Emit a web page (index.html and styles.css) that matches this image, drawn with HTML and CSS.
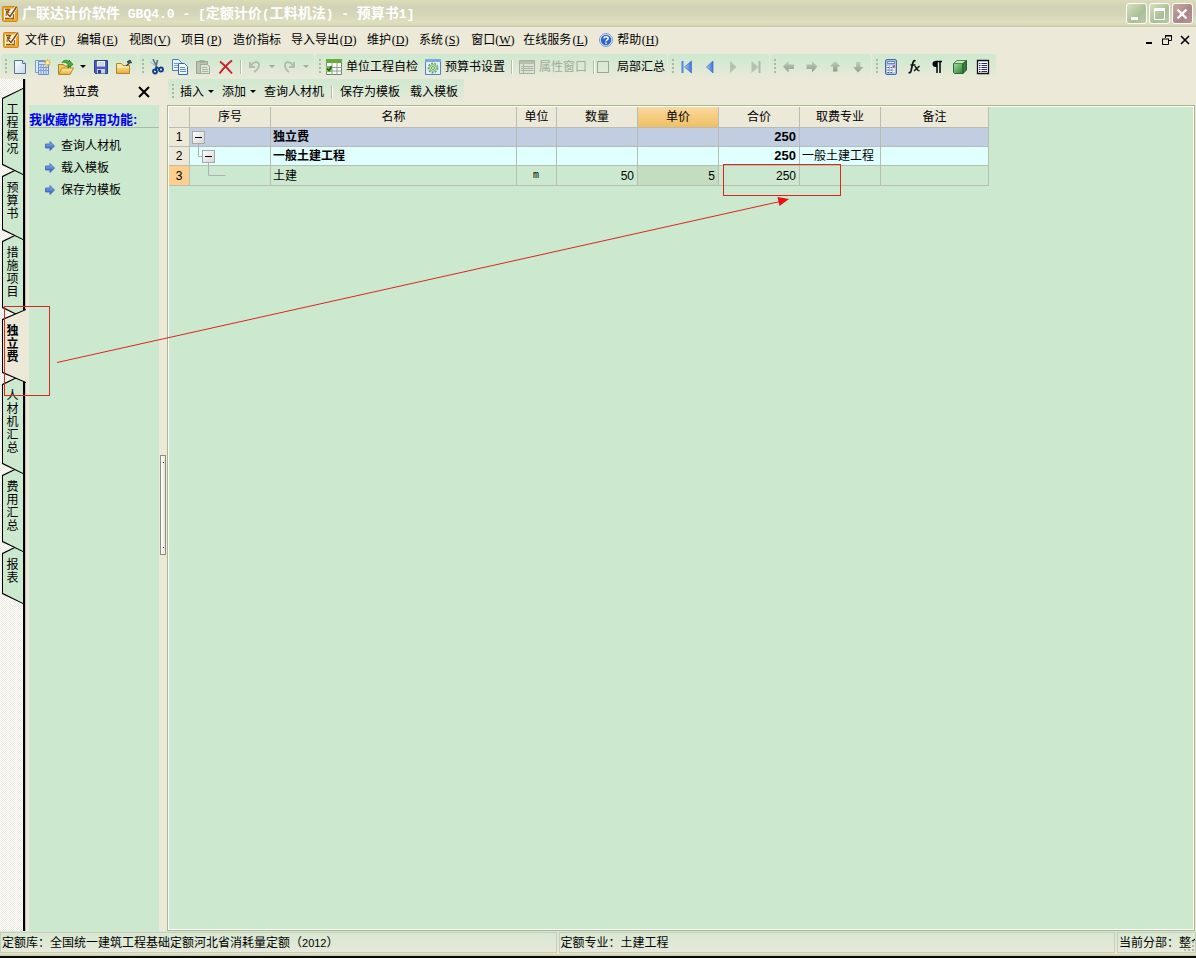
FILE: index.html
```html
<!DOCTYPE html>
<html lang="zh-CN">
<head>
<meta charset="utf-8">
<title>广联达计价软件 GBQ4.0</title>
<link rel="stylesheet" href="styles.css">
</head>
<body>
<svg class="defs" aria-hidden="true">
  <defs>
    <linearGradient id="gBlue" x1="0" y1="0" x2="0" y2="1"><stop offset="0" stop-color="#9dbdf5"/><stop offset="1" stop-color="#2450b8"/></linearGradient>
    <linearGradient id="gNav" x1="0" y1="0" x2="1" y2="0"><stop offset="0" stop-color="#a9cbf8"/><stop offset="1" stop-color="#3d6fd8"/></linearGradient>
    <linearGradient id="gGrey" x1="0" y1="0" x2="0" y2="1"><stop offset="0" stop-color="#c4cebe"/><stop offset="1" stop-color="#909b8a"/></linearGradient>
    <linearGradient id="gFold" x1="0" y1="0" x2="0" y2="1"><stop offset="0" stop-color="#fff0a8"/><stop offset="1" stop-color="#e6ad3c"/></linearGradient>
    <linearGradient id="gPage" x1="0" y1="0" x2="1" y2="1"><stop offset="0" stop-color="#ffffff"/><stop offset="1" stop-color="#c4d6f0"/></linearGradient>
    <linearGradient id="gGreen" x1="0" y1="0" x2="1" y2="1"><stop offset="0" stop-color="#a4dc9c"/><stop offset="1" stop-color="#2c7c34"/></linearGradient>
    <linearGradient id="gBox" x1="0" y1="0" x2="1" y2="1"><stop offset="0" stop-color="#ffffff"/><stop offset="1" stop-color="#d4d4d4"/></linearGradient>
    <symbol id="logo" viewBox="0 0 16 16">
      <rect x="0.500" y="0.500" width="15" height="15" rx="1" fill="#f5a41e" stroke="#c98a2c"/>
      <path d="M2 2.500h11.500v11.500H2z" fill="#fdf3d8"/>
      <path d="M3 3.500h4.500L6 5.500H4.500v1.500h2L5 9H3.500M3 12.500h8.500V8" stroke="#8a5a14" stroke-width="1.300" fill="none"/>
      <path d="M14.500 1L8 10.500 5.500 8" stroke="#fff" stroke-width="3" fill="none"/>
      <path d="M14.500 1L8 10.500 5.500 8" stroke="#7b4a16" stroke-width="1.500" fill="none"/>
      <path d="M13.500 5v8.500H3" stroke="#f5a41e" fill="none"/>
    </symbol>
    <symbol id="bluearrow" viewBox="0 0 10 10"><path d="M.5 3h4.500V.5L9.500 5 5 9.500V7H.5z" fill="url(#gBlue)" stroke="#3c62b4" stroke-width=".8"/></symbol>
  </defs>
</svg>

<div class="app">
  <header class="titlebar">
    <svg class="ico"><use href="#logo"/></svg>
    <h1>广联达计价软件<span class="lat"> GBQ4.0 - [</span>定额计价<span class="lat">(</span>工料机法<span class="lat">) - </span>预算书<span class="lat">1]</span></h1>
    <div class="winbtns">
      <button class="winbtn" aria-label="最小化"><svg width="18" height="18"><path d="M4 13.500h7" stroke="#fff" stroke-width="3"/></svg></button>
      <button class="winbtn" aria-label="最大化"><svg width="18" height="18"><path d="M4.500 5v9.500h10V5" stroke="#fff" fill="none"/><path d="M4 4.500h11" stroke="#fff" stroke-width="3"/></svg></button>
      <button class="winbtn close" aria-label="关闭"><svg width="18" height="18"><path d="M4.500 4.500l9 9M13.500 4.500l-9 9" stroke="#fff" stroke-width="2.400"/></svg></button>
    </div>
  </header>

  <nav class="menubar">
    <svg class="ico"><use href="#logo"/></svg>
    <button>文件<span class="key">(<u>F</u>)</span></button>
    <button>编辑<span class="key">(<u>E</u>)</span></button>
    <button>视图<span class="key">(<u>V</u>)</span></button>
    <button>项目<span class="key">(<u>P</u>)</span></button>
    <button>造价指标</button>
    <button>导入导出<span class="key">(<u>D</u>)</span></button>
    <button>维护<span class="key">(<u>D</u>)</span></button>
    <button>系统<span class="key">(<u>S</u>)</span></button>
    <button>窗口<span class="key">(<u>W</u>)</span></button>
    <button>在线服务<span class="key">(<u>L</u>)</span></button>
    <button class="help"><svg width="14" height="14" viewBox="0 0 14 14"><circle cx="7" cy="7" r="6.500" fill="#dfe8f6" stroke="#7a98cc"/><circle cx="7" cy="7" r="5.200" fill="#2c66cc"/><path d="M5 5.600c0-2.600 4.200-2.500 4.200-.1C9.200 7 7 6.900 7 8.600M7 9.600v1.500" stroke="#fff" stroke-width="1.500" fill="none"/></svg><span>帮助<span class="key">(<u>H</u>)</span></span></button>
    <div class="mdi">
      <button aria-label="最小化子窗口"><svg width="10" height="10"><path d="M2 8h6" stroke="#000" stroke-width="2"/></svg></button>
      <button aria-label="还原子窗口"><svg width="10" height="10"><path d="M3.500 3V.5h6v5H7M3 1h7" stroke="#000" fill="none"/><path d="M.5 4v5.500h6V4M0 4h7" stroke="#000" fill="none"/></svg></button>
      <button aria-label="关闭子窗口"><svg width="10" height="10"><path d="M1 1l8 8M9 1l-8 8" stroke="#000" stroke-width="1.600"/></svg></button>
    </div>
  </nav>

  <div class="toolbar">
    <div class="group">
      <i class="grip"></i>
      <button class="tb" aria-label="新建"><svg class="ico" viewBox="0 0 16 16"><path d="M2.500 1.500h8l3 3v10h-11z" fill="url(#gPage)" stroke="#5c7390"/><path d="M10.500 1.500v3h3" fill="#dfe9f8" stroke="#5c7390"/></svg></button>
      <button class="tb" aria-label="新建模板"><svg class="ico" viewBox="0 0 16 16"><path d="M.5 1.500h10v12H.5z" fill="#dce9fa" stroke="#7e9cc8"/><path d="M3.500 2.500h10v13h-10z" fill="#cfe0f6" stroke="#6e90c4"/><path d="M6 5v10M8.500 5v10M11 7v8M4 5.500h6M4 8.500h9M4 11.500h9" stroke="#7d9ed0"/><path d="M12.500 0v7M9 3.500h7M10 1l5 5M15 1l-5 5" stroke="#efb93e" stroke-width="1.200"/><circle cx="12.500" cy="3.500" r="1.500" fill="#fff6b8"/></svg></button>
      <button class="tb" aria-label="打开"><svg class="ico" viewBox="0 0 16 16"><path d="M.5 14.500v-9h5l1 1.500h6v7.500z" fill="#f0cc5c" stroke="#ae8120"/><path d="M.5 15.500L4 9h11.500l-3.500 6.500z" fill="url(#gFold)" stroke="#b98a24"/><path d="M4 3.500C6 .5 9.500.5 11 3V1l4 4.500-5 3.500V5.500C8.500 3 6 3 4 3.500z" fill="#4cae36" stroke="#247a1e" stroke-width=".8"/></svg></button>
      <button class="caret" aria-label="打开选项"></button>
      <button class="tb" aria-label="保存"><svg class="ico" viewBox="0 0 16 16"><path d="M1.500 1.500h13v13h-12l-1-1z" fill="#4a5fb4" stroke="#2b3c8c"/><path d="M4 2h8v5.500H4z" fill="#f4f6fc"/><path d="M5 4h6M5 6h6" stroke="#aeb8d8"/><path d="M4 10h8v4.500H4z" fill="#c8d0ea"/><path d="M5 11h3v3.500H5z" fill="#2b3c8c"/></svg></button>
      <button class="tb" aria-label="导出"><svg class="ico" viewBox="0 0 16 16"><path d="M.5 14.500v-10h5l1.500 2h6.500v8z" fill="url(#gFold)" stroke="#b08428"/><path d="M1 8h12" stroke="#fff5c4"/><path d="M10 6.500c2 0 3.500-1.500 3.500-4M11 3l3-2 1.500 3z" stroke="#3c4450" fill="#3c4450"/></svg></button>
    </div>
    <div class="group">
      <i class="grip"></i>
      <button class="tb" aria-label="剪切"><svg class="ico" viewBox="0 0 16 16"><path d="M4 0l4.500 9.500M8.500 1L6.500 9.500" stroke="#60708c" stroke-width="1.600"/><path d="M1.500 3l5 4" stroke="#9ba7bb"/><circle cx="6" cy="12.500" r="2" fill="none" stroke="#123a8c" stroke-width="1.800"/><circle cx="12" cy="10.500" r="2" fill="none" stroke="#123a8c" stroke-width="1.800"/><path d="M7 8l4 2M7 9v3" stroke="#123a8c" stroke-width="1.500"/></svg></button>
      <button class="tb" aria-label="复制"><svg class="ico" viewBox="0 0 16 16"><path d="M.5.500h6l3 3v8h-9z" fill="#e8f1fd" stroke="#4a7cc4"/><path d="M2 4.500h4M2 6.500h4M2 8.500h4" stroke="#74a0dc"/><path d="M6.500 4.500h6l3 3v8h-9z" fill="#f2f7fe" stroke="#2f66b4"/><path d="M8 8.500h5M8 10.500h6M8 12.500h6" stroke="#5b8cd0"/></svg></button>
      <button class="tb" aria-label="粘贴" disabled><svg class="ico" viewBox="0 0 16 16"><path d="M1.500 2.500h11v12h-11z" fill="#b9c4b4" stroke="#98a494"/><path d="M4.500 1h5v3h-5z" fill="#a3ae9e"/><path d="M5.500 5.500h7l2 2v7h-9z" fill="#dce4d6" stroke="#9fab9a"/><path d="M7 8.500h5M7 10.500h6M7 12.500h6" stroke="#a9b4a4"/></svg></button>
      <button class="tb" aria-label="删除"><svg class="ico" viewBox="0 0 16 16"><path d="M2 2.500c4 3 8 7 12 12M14 1.500C9 5 5 10 1.500 14.500" stroke="#c8202c" stroke-width="2" fill="none"/></svg></button>
      <i class="sep"></i>
      <button class="tb ud" aria-label="撤销" disabled><svg class="ico" viewBox="0 0 16 16"><path d="M4 7c2-5 8-5 8-1 0 3-3 6-5 7M3 3v5h5" stroke="#b3bdae" stroke-width="2" fill="none"/></svg></button>
      <button class="caret" aria-label="撤销列表" disabled></button>
      <button class="tb ud" aria-label="重做" disabled><svg class="ico" viewBox="0 0 16 16"><path d="M12 7c-2-5-8-5-8-1 0 3 1 5 4 7M13 3v5H8" stroke="#b3bdae" stroke-width="2" fill="none"/></svg></button>
      <button class="caret" aria-label="重做列表" disabled></button>
    </div>
    <div class="group">
      <i class="grip"></i>
      <button class="tbt"><svg class="ico" viewBox="0 0 16 16"><path d="M.5 1.500h15v14H.5z" fill="#fff" stroke="#6c8c6c"/><path d="M0 0h16v4H0z" fill="#6aaa40"/><path d="M0 8.500h16M0 12h16M6 4v11.500M11 4v11.500" stroke="#8c9c90"/><path d="M0 7h6v6H0z" fill="#8ab65c"/><path d="M1 9.500l2 2 2.500-4" stroke="#1c5c1c" stroke-width="1.500" fill="none"/></svg>单位工程自检</button>
      <button class="tbt"><svg class="ico" viewBox="0 0 16 16"><path d="M.5.500h15v15H.5z" fill="#e4f0f8" stroke="#5484bc"/><path d="M0 0h16v3H0z" fill="#7ca8dc"/><circle cx="8" cy="9" r="4.600" fill="#d6efd0" stroke="#6ba56c" stroke-width="1.600" stroke-dasharray="2 1.200"/><circle cx="8" cy="9" r="3.300" fill="none" stroke="#7db67a"/><circle cx="8" cy="9" r="1.500" fill="#fff" stroke="#5c9860"/></svg>预算书设置</button>
      <i class="sep"></i>
      <button class="tbt" disabled><svg class="ico" viewBox="0 0 16 16"><path d="M.5 1.500h15v13H.5z" fill="#dae2d4" stroke="#a3afa0"/><path d="M1 2h14v3H1z" fill="#b4c0b0"/><path d="M2 7.500h2M5 7.500h9M2 9.500h2M5 9.500h9M2 11.500h2M5 11.500h9M4.500 5v9" stroke="#a9b4a5"/></svg>属性窗口</button>
      <i class="sep"></i>
      <label class="check"><input type="checkbox">局部汇总</label>
    </div>
    <div class="group">
      <i class="grip"></i>
      <button class="tb" aria-label="首行"><svg class="ico" viewBox="0 0 16 16"><path d="M3.500 2v12" stroke="#5484dc" stroke-width="2"/><path d="M12.500 2v12l-7-6z" fill="url(#gNav)" stroke="#4a78d0" stroke-width=".8"/></svg></button>
      <button class="tb" aria-label="上一行"><svg class="ico" viewBox="0 0 16 16"><path d="M11 2v12L4.500 8z" fill="url(#gNav)" stroke="#4a78d0" stroke-width=".8"/></svg></button>
      <button class="tb" aria-label="下一行" disabled><svg class="ico" viewBox="0 0 16 16"><path d="M5 2v12l6.500-6z" fill="#b4c2b2"/></svg></button>
      <button class="tb" aria-label="末行" disabled><svg class="ico" viewBox="0 0 16 16"><path d="M3.500 2v12l7-6z" fill="#b4c2b2"/><path d="M11.500 2v12" stroke="#acbaaa" stroke-width="2"/></svg></button>
    </div>
    <div class="group">
      <i class="grip"></i>
      <button class="tb" aria-label="升级" disabled><svg class="ico" viewBox="0 0 16 16"><path d="M2 7.500L7.500 2v3.500H13v4.500H7.500v3.500z" fill="url(#gGrey)"/></svg></button>
      <button class="tb" aria-label="降级" disabled><svg class="ico" viewBox="0 0 16 16"><path d="M13.500 7.500L8 2v3.500H2.500v4.500H8v3.500z" fill="url(#gGrey)"/></svg></button>
      <button class="tb" aria-label="上移" disabled><svg class="ico" viewBox="0 0 16 16"><path d="M8 2L3 7.500h3v5h4.500v-5h3z" fill="url(#gGrey)"/></svg></button>
      <button class="tb" aria-label="下移" disabled><svg class="ico" viewBox="0 0 16 16"><path d="M8 13.500L3 8h3V3h4.500v5h3z" fill="url(#gGrey)"/></svg></button>
    </div>
    <div class="group">
      <i class="grip"></i>
      <button class="tb" aria-label="计算器"><svg class="ico" viewBox="0 0 16 16"><rect x="2.500" y=".5" width="11" height="15" rx="1.500" fill="#a9c1ea" stroke="#4b68a8"/><path d="M4.500 2.500h7v2h-7z" fill="#eef4fd" stroke="#6884c0"/><path d="M4 7.500h2M7 7.500h2M4 10h2M7 10h2M4 12.500h2M7 12.500h2M10 12.500h2M10 10h2" stroke="#fff" stroke-width="1.600"/><path d="M4.500 8.500h1.500M7.500 8.500H9M4.500 11h1.500M7.500 11H9M4.500 13.500h1.500M7.500 13.500H9" stroke="#3c5498"/><path d="M10 7.500h2" stroke="#d03c3c" stroke-width="2"/></svg></button>
      <button class="tb" aria-label="函数"><svg class="ico" viewBox="0 0 16 16"><path d="M9.500 2C7.500 1 7 3 6.500 5.500L5 12c-.4 1.500-1.200 2-2.500 1.500M4.500 6h5" stroke="#111" stroke-width="1.700" fill="none"/><path d="M8.500 7.500c2-.5 2 5 5 4M13.500 7L8 12" stroke="#111" stroke-width="1.400" fill="none"/></svg></button>
      <button class="tb" aria-label="段落"><svg class="ico" viewBox="0 0 16 16"><path d="M13 2.500H6.500M8 2v12M11 2v12" stroke="#000" stroke-width="1.500"/><path d="M8 2H6.500a3 3 0 0 0 0 6H8z" fill="#000"/></svg></button>
      <button class="tb" aria-label="立体图"><svg class="ico" viewBox="0 0 16 16"><path d="M1.500 4.500h9.500v10H2.500l-1-1z" fill="url(#gGreen)" stroke="#2c6c34"/><path d="M1.500 4.500L5 1.500h9.500l-3.500 3z" fill="#c6eabc" stroke="#4c8c4c"/><path d="M11 4.500l3.500-3V11l-3.500 3.500z" fill="#347c3c" stroke="#24602c"/></svg></button>
      <button class="tb" aria-label="清单"><svg class="ico" viewBox="0 0 16 16"><path d="M2.500 1.500h11v13h-11z" fill="#fff" stroke="#111" stroke-width="1.300"/><path d="M4 4.500h1.500M6.500 4.500H12M4 6.500h1.500M6.500 6.500H12M4 8.500h1.500M6.500 8.500H12M4 10.500h1.500M6.500 10.500H12M4 12.500h1.500M6.500 12.500H12" stroke="#24248c"/></svg></button>
    </div>
  </div>

  <main class="work">
    <div class="tabs" role="tablist">
      <button class="tab" role="tab">工程概况</button>
      <button class="tab" role="tab">预算书</button>
      <button class="tab" role="tab">措施项目</button>
      <button class="tab selected" role="tab" aria-selected="true">独立费</button>
      <button class="tab" role="tab">人材机汇总</button>
      <button class="tab" role="tab">费用汇总</button>
      <button class="tab" role="tab">报表</button>
    </div>

    <aside class="side">
      <div class="sidehead"><h2>独立费</h2><button aria-label="关闭面板"><svg width="12" height="12"><path d="M1 1l10 10M11 1L1 11" stroke="#000" stroke-width="2"/></svg></button></div>
      <div class="sidebody">
        <h3>我收藏的常用功能:</h3>
        <a href="#"><svg width="10" height="10"><use href="#bluearrow"/></svg>查询人材机</a>
        <a href="#"><svg width="10" height="10"><use href="#bluearrow"/></svg>载入模板</a>
        <a href="#"><svg width="10" height="10"><use href="#bluearrow"/></svg>保存为模板</a>
      </div>
    </aside>

    <div class="splitter"><i class="handle"></i></div>

    <section class="content">
      <div class="subbar">
        <div class="group">
          <i class="grip"></i>
          <button class="txt">插入</button><button class="caret" aria-label="插入选项"></button>
          <button class="txt">添加</button><button class="caret" aria-label="添加选项"></button>
          <button class="txt">查询人材机</button>
          <i class="sep"></i>
          <button class="txt">保存为模板</button>
          <button class="txt">载入模板</button>
        </div>
      </div>
      <div class="gridbox">
        <table class="grid">
          <colgroup><col class="c0"><col class="c1"><col class="c2"><col class="c3"><col class="c1"><col class="c1"><col class="c1"><col class="c1"><col class="c8"></colgroup>
          <thead>
            <tr><th></th><th>序号</th><th>名称</th><th>单位</th><th>数量</th><th class="cur">单价</th><th>合价</th><th>取费专业</th><th>备注</th></tr>
          </thead>
          <tbody>
            <tr class="lvl1"><th>1</th><td class="tree"><svg width="60" height="18"><path d="M8.500 16v2" stroke="#b0b0b0"/><rect x="2.500" y="3.500" width="12" height="12" fill="url(#gBox)" stroke="#a8a8a8"/><path d="M5 9.500h7" stroke="#000"/></svg></td><td>独立费</td><td></td><td></td><td></td><td class="num">250</td><td></td><td></td></tr>
            <tr class="lvl2"><th>2</th><td class="tree"><svg width="60" height="18"><path d="M8.500 0v9.500h4M18.500 16v2" stroke="#b0b0b0" fill="none"/><rect x="12.500" y="3.500" width="12" height="12" fill="url(#gBox)" stroke="#a8a8a8"/><path d="M15 9.500h7" stroke="#000"/></svg></td><td>一般土建工程</td><td></td><td></td><td></td><td class="num">250</td><td class="plain">一般土建工程</td><td></td></tr>
            <tr class="lvl3"><th class="cur">3</th><td class="tree"><svg width="60" height="18"><path d="M18.500 0v9.500h17" stroke="#b0b0b0" fill="none"/></svg></td><td>土建</td><td class="unit">m</td><td class="num">50</td><td class="num active">5</td><td class="num">250</td><td></td><td></td></tr>
          </tbody>
        </table>
      </div>
    </section>
  </main>

  <footer class="status">
    <div class="pane">定额库：全国统一建筑工程基础定额河北省消耗量定额（<span class="dig">2012</span>）</div>
    <div class="pane">定额专业：土建工程</div>
    <div class="pane last">当前分部：整个<svg class="sizegrip" width="12" height="12"><path d="M9 2h2M9 6h2M5 6h2M9 10h2M5 10h2M1 10h2" stroke="#b2b8a4" stroke-width="2"/></svg></div>
  </footer>

  <svg class="marks" width="860" height="420" aria-hidden="true">
    <g fill="none" stroke="#d8281c">
      <rect x="4.500" y="306.500" width="45" height="89"/>
      <rect x="723.500" y="164.500" width="117" height="31"/>
      <path d="M57 362.500L780 201.500"/>
    </g>
    <path d="M789 199l-11.500-2 2 9z" fill="#e81010"/>
  </svg>
</div>
</body>
</html>
```
FILE: styles.css
```css
* { box-sizing: border-box; }

body {
  margin: 0;
  background: #ece9d8;
  color: #000;
  font: 12px/16px "Liberation Sans", "Noto Sans CJK SC", sans-serif;
}

button {
  margin: 0;
  padding: 0;
  border: 0;
  background: none;
  color: inherit;
  font: inherit;
  white-space: nowrap;
}

h1, h2, h3 { margin: 0; font: inherit; }
svg { display: block; flex: none; }
.defs { position: absolute; width: 0; height: 0; }
.ico { width: 16px; height: 16px; }

.app {
  position: relative;
  display: flex;
  flex-direction: column;
  height: 100vh;
  overflow: hidden;
  border-bottom: 2px solid #0c0c06;
}

/* title bar */
.titlebar {
  display: flex;
  align-items: center;
  flex: none;
  height: 27px;
  padding: 0 3px 0 2px;
  gap: 4px;
  background: linear-gradient(#dddcb8, #d2d3b6 25%, #d5d6b9 55%, #dfdfbf 80%, #dadab9 92%, #c4c4a6);
}
.titlebar h1 {
  flex: 1;
  color: #fff;
  font-size: 14px;
  font-weight: bold;
  white-space: pre;
}
.lat { font-family: "Liberation Mono", monospace; font-size: 13px; }
.winbtns { display: flex; gap: 2px; }
.winbtn {
  width: 21px;
  height: 21px;
  border: 1px solid #fff;
  border-radius: 3px;
  background: linear-gradient(135deg, #d7dfbe, #a9c097 60%, #b8caa3);
}
.winbtn.close { background: linear-gradient(135deg, #c9a8a4, #ab8486 60%, #b89496); }

/* menu bar */
.menubar {
  display: flex;
  align-items: center;
  flex: none;
  gap: 10px;
  height: 26px;
  padding: 0 6px 0 3px;
}
.menubar .ico { margin-right: -4px; }
.key {
  display: inline-block;
  width: 18px;
  font-family: "Liberation Serif", serif;
  font-size: 12px;
  line-height: 16px;
  text-align: center;
}
.help { display: flex; align-items: center; gap: 4px; }
.mdi { display: flex; gap: 8px; margin-left: auto; }

/* toolbars */
.toolbar { display: flex; flex: none; gap: 1px; height: 26px; padding: 1px 0 0 1px; }
.group {
  display: flex;
  align-items: center;
  height: 25px;
  padding-right: 2px;
  border-radius: 2px;
  background: linear-gradient(#cfe8d0, #dbe9d4 50%, #ebe9d9);
}
.grip {
  width: 3px;
  height: 15px;
  margin: 0 0 0 4px;
  background: repeating-linear-gradient(#a9b8a4 0 2px, transparent 2px 4px);
  border-right: 1px solid #dfead6;
}
.sep { width: 7px; height: 14px; background: linear-gradient(90deg, transparent 3px, #b4bda8 3px 4px, #fff 4px 5px, transparent 5px); }
.tb { display: flex; align-items: center; justify-content: center; width: 23px; height: 23px; }
.ud { width: 22px; }
.tbt { display: flex; align-items: center; gap: 4px; padding: 0 3px 0 4px; }
.tbt:disabled { color: #a5ab9b; }
.caret { display: flex; align-items: center; justify-content: center; width: 12px; height: 20px; }
.caret::before {
  content: "";
  border: 3px solid transparent;
  border-top-color: #000;
  border-bottom: 0;
}
.caret:disabled::before { border-top-color: #a5ab9b; }
.check { display: flex; align-items: center; gap: 8px; }
.check input {
  appearance: none;
  width: 12px;
  height: 12px;
  margin: 0;
  border: 1px solid #9ba693;
  background: transparent;
}

/* work area */
.work { display: flex; flex: 1; min-height: 0; }

.tabs {
  display: flex;
  flex-direction: column;
  flex: none;
  width: 25px;
  padding: 9px 0 0 2px;
  border-right: 2px solid #000;
  background: repeating-conic-gradient(#f0ebe0 0 25%, #fff 0 50%) 0 0 / 2px 2px;
}
.tab {
  position: relative;
  width: 21px;
  padding: 16px 4px 19px 4px;
  background: #000;
  clip-path: polygon(0 10px, 100% 0, 100% 100%, 0 calc(100% - 10px));
  line-height: 13px;
  white-space: normal;
  word-break: break-all;
}
.tab + .tab { margin-top: -9px; }
.tab::before {
  content: "";
  position: absolute;
  inset: 0;
  z-index: -1;
  background: #cce8cf;
  clip-path: polygon(1px 11px, 100% 1px, 100% calc(100% - 1px), 1px calc(100% - 11px));
}
.tab:nth-child(1) { z-index: 7; }
.tab:nth-child(2) { z-index: 6; }
.tab:nth-child(3) { z-index: 5; }
.tab:nth-child(5) { z-index: 4; }
.tab:nth-child(6) { z-index: 3; }
.tab:nth-child(7) { z-index: 2; }
.tab.selected { z-index: 8; width: 24px; padding-right: 7px; font-weight: bold; }
.tab.selected::before { background: #ece9d8; }

.side { display: flex; flex-direction: column; flex: none; width: 134px; padding-left: 3px; border-left: 1px solid #c4bfae; }
.sidehead { display: flex; align-items: center; height: 26px; padding: 0 9px 0 34px; }
.sidehead h2 { flex: 1; }
.sidebody {
  display: flex;
  flex-direction: column;
  flex: 1;
  gap: 6px;
  padding-top: 7px;
  background: #cce8cf;
}
.sidebody h3 {
  margin-bottom: 4px;
  border-bottom: 1px solid #a9b8a9;
  color: #0000f0;
  font-size: 13px;
  line-height: 15px;
  font-weight: bold;
  white-space: nowrap;
}
.sidebody a {
  display: flex;
  align-items: center;
  gap: 6px;
  padding-left: 16px;
  color: #000;
  text-decoration: none;
}

.splitter { display: flex; align-items: center; justify-content: center; flex: none; width: 8px; }
.handle {
  width: 6px;
  height: 100px;
  border: 1px solid #8c8c80;
  background:
    linear-gradient(#223, #223) 2px 6px / 1px 1px no-repeat,
    linear-gradient(#223, #223) 2px 91px / 1px 1px no-repeat,
    linear-gradient(90deg, #fff, #e4e4dc);
}

.content { display: flex; flex-direction: column; flex: 1; min-width: 0; padding-right: 1px; }
.subbar { display: flex; height: 26px; padding: 0 0 1px 1px; }
.subbar .txt { padding: 0 1px 0 5px; }
.subbar .sep { margin-left: 3px; }
.subbar .txt:last-child { margin-left: 4px; padding-right: 4px; }

.gridbox {
  flex: 1;
  border: 1px solid #a9b884;
  box-shadow: inset 0 0 0 1px #fff;
  padding: 1px;
  background: #cce8cf;
  overflow: hidden;
}
.grid { width: 820px; table-layout: fixed; border-spacing: 0; }
.c0 { width: 21px; }
.c1 { width: 81px; }
.c2 { width: 246px; }
.c3 { width: 40px; }
.c8 { width: 108px; }
.grid th, .grid td {
  height: 19px;
  padding: 0 3px 0 2px;
  border-right: 1px solid #b8bcb4;
  border-bottom: 1px solid #b8bcb4;
  text-align: left;
  white-space: nowrap;
}
.grid th { background: #ece9d8; font-weight: normal; text-align: center; padding: 0; }
.grid thead th { height: 21px; }
.grid .lvl3 td, .grid .lvl3 th { height: 20px; }
.grid .tree { padding: 0; vertical-align: top; }
.grid thead th.cur { background: linear-gradient(#f9d9a0, #efbf62); }
.grid tbody th.cur { background: #fccf8c; }
.grid .num { text-align: right; }
.lvl1 td { background: #c1cde0; font-weight: bold; }
.lvl2 td { background: #e0ffff; font-weight: bold; }
.lvl1 .num, .lvl2 .num { font-size: 13px; }
.grid td.plain { font-weight: normal; }
.grid td.unit { font-family: "Liberation Mono", monospace; font-size: 10px; text-align: center; }
.grid td.active { background: #c4dcbf; }

/* status bar */
.status {
  display: flex;
  flex: none;
  gap: 2px;
  height: 25px;
  padding: 1px 0 3px;
  background: linear-gradient(#d5e8d2, #e6e9d8 80%, #ece9d8 88%, #c3cba5);
}
.pane {
  position: relative;
  flex: 1;
  padding: 1px;
  border: 1px solid #c9cdb9;
  white-space: nowrap;
  overflow: hidden;
  line-height: 18px;
}
.pane.last { flex: 0 0 79px; }
.dig { font-size: 11px; }
.sizegrip { position: absolute; right: 0; bottom: 0; }

.marks { position: absolute; top: 0; left: 0; pointer-events: none; z-index: 20; }
```
